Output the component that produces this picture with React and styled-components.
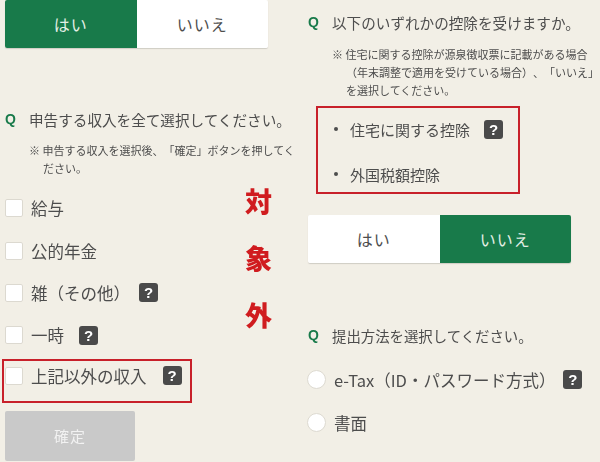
import React from 'react'
import styled, { createGlobalStyle } from 'styled-components'

const Global = createGlobalStyle`
html, body { margin:0; padding:0; background:#f2efe6; }
body { font-family:"Noto Sans CJK JP","Noto Sans",sans-serif; color:#4d4d4d; text-spacing-trim:space-all; }
`
const Page = styled.div`
position:relative;
width:600px;
height:462px;
overflow:hidden;
display:flex;
filter:blur(0.3px);
`
const Column = styled.div`
width:300px;
box-sizing:border-box;
padding:${p => p.$right ? '12px 0 0 8px' : '0 0 0 5px'};
`
const Toggle = styled.div`
display:flex;
width:263px;
height:48px;
margin-top:${p => p.$top || 0}px;
border-radius:2px;
overflow:hidden;
box-shadow:0 1px 1px #cfccc4;
`
const ToggleButton = styled.div`
flex:1;
display:flex;
align-items:center;
justify-content:center;
font-size:16px;
letter-spacing:1px;
background:${p => p.$on ? '#187a4a' : '#fff'};
color:${p => p.$on ? '#e4efe6' : '#4d4d4d'};
`
const Question = styled.div`
display:flex;
align-items:center;
height:20px;
margin-top:${p => p.$top}px;
font-size:${p => p.$size}px;
white-space:nowrap;
`
const QMark = styled.span`
width:24px;
flex:none;
font-family:"Liberation Sans",sans-serif;
font-weight:bold;
font-size:14px;
color:#187a4a;
`
const Note = styled.p`
margin:${p => p.$top}px 0 0 24px;
padding-left:14px;
text-indent:-14px;
font-size:11px;
line-height:18px;
width:${p => p.$w}px;
`
const CheckList = styled.div`
display:flex;
flex-direction:column;
margin-top:10px;
`
const CheckRow = styled.div`
display:flex;
align-items:center;
width:fit-content;
height:42.4px;
font-size:16.5px;
`
const BoxedRow = styled(CheckRow)`
box-sizing:border-box;
width:190px;
height:44px;
margin:2px 0 0 -3px;
padding:0 0 10px 1px;
border:2px solid #c8202a;
`
const Check = styled.span`
width:18px;
height:18px;
margin-right:8px;
flex:none;
box-sizing:border-box;
background:#fff;
border:1px solid #dcd9d0;
border-radius:2px;
`
const Help = styled.span`
display:inline-flex;
align-items:center;
justify-content:center;
width:19px;
height:19px;
margin-left:${p => p.$left}px;
flex:none;
border-radius:3px;
background:#4a4a4a;
color:#fff;
font-family:"Liberation Sans",sans-serif;
font-weight:bold;
font-size:15px;
`
const Confirm = styled.div`
width:130px;
height:50px;
margin-top:8px;
display:flex;
align-items:center;
justify-content:center;
background:#c9c9c9;
color:#f2f2f2;
border-radius:2px;
font-size:15px;
letter-spacing:1px;
`
const RedBox = styled.div`
box-sizing:border-box;
width:204px;
height:88px;
margin:7px 0 0 8px;
padding:3px 0 0 16px;
border:2px solid #c8202a;
display:flex;
flex-direction:column;
justify-content:center;
gap:25px;
`
const Deduction = styled.div`
display:flex;
align-items:center;
height:20px;
font-size:15px;
&::before {
  content:"";
  width:4px;
  height:4px;
  margin-right:12px;
  border-radius:50%;
  background:#4d4d4d;
}
`
const RadioRow = styled.div`
display:flex;
align-items:center;
height:43px;
font-size:16.5px;
white-space:nowrap;
`
const Radio = styled.span`
width:19px;
height:19px;
margin:0 8px 0 -1px;
flex:none;
box-sizing:border-box;
background:#fff;
border:1px solid #dcd9d0;
border-radius:50%;
`
const RadioList = styled.div`
margin-top:13px;
`
const Stamp = styled.div`
position:absolute;
left:245px;
top:185px;
display:flex;
flex-direction:column;
gap:25px;
font-size:27px;
line-height:32px;
font-weight:900;
color:#d01c1f;
`

export default function App() {
  return (
    <Page>
      <Global />
      <Column>
        <Toggle>
          <ToggleButton $on>はい</ToggleButton>
          <ToggleButton>いいえ</ToggleButton>
        </Toggle>
        <Question $top={61} $size={14.6}><QMark>Q</QMark>申告する収入を全て選択してください。</Question>
        <Note $top={12} $w={254}>※ 申告する収入を選択後、「確定」ボタンを押してください。</Note>
        <CheckList>
          <CheckRow><Check />給与</CheckRow>
          <CheckRow><Check />公的年金</CheckRow>
          <CheckRow><Check />雑（その他）<Help $left={9}>?</Help></CheckRow>
          <CheckRow><Check />一時<Help $left={15}>?</Help></CheckRow>
          <BoxedRow><Check />上記以外の収入<Help $left={16}>?</Help></BoxedRow>
        </CheckList>
        <Confirm>確定</Confirm>
      </Column>
      <Column $right>
        <Question $top={0} $size={14.6}><QMark>Q</QMark>以下のいずれかの控除を受けますか。</Question>
        <Note $top={13} $w={254}>※ 住宅に関する控除が源泉徴収票に記載がある場合（年末調整で適用を受けている場合）、「いいえ」を選択してください。</Note>
        <RedBox>
          <Deduction>住宅に関する控除<Help $left={14}>?</Help></Deduction>
          <Deduction>外国税額控除</Deduction>
        </RedBox>
        <Toggle $top={21}>
          <ToggleButton>はい</ToggleButton>
          <ToggleButton $on>いいえ</ToggleButton>
        </Toggle>
        <Question $top={62} $size={14.4}><QMark>Q</QMark>提出方法を選択してください。</Question>
        <RadioList>
          <RadioRow><Radio />e-Tax（ID・パスワード方式）<Help $left={8}>?</Help></RadioRow>
          <RadioRow><Radio />書面</RadioRow>
        </RadioList>
      </Column>
      <Stamp>
        <span>対</span>
        <span>象</span>
        <span>外</span>
      </Stamp>
    </Page>
  )
}
